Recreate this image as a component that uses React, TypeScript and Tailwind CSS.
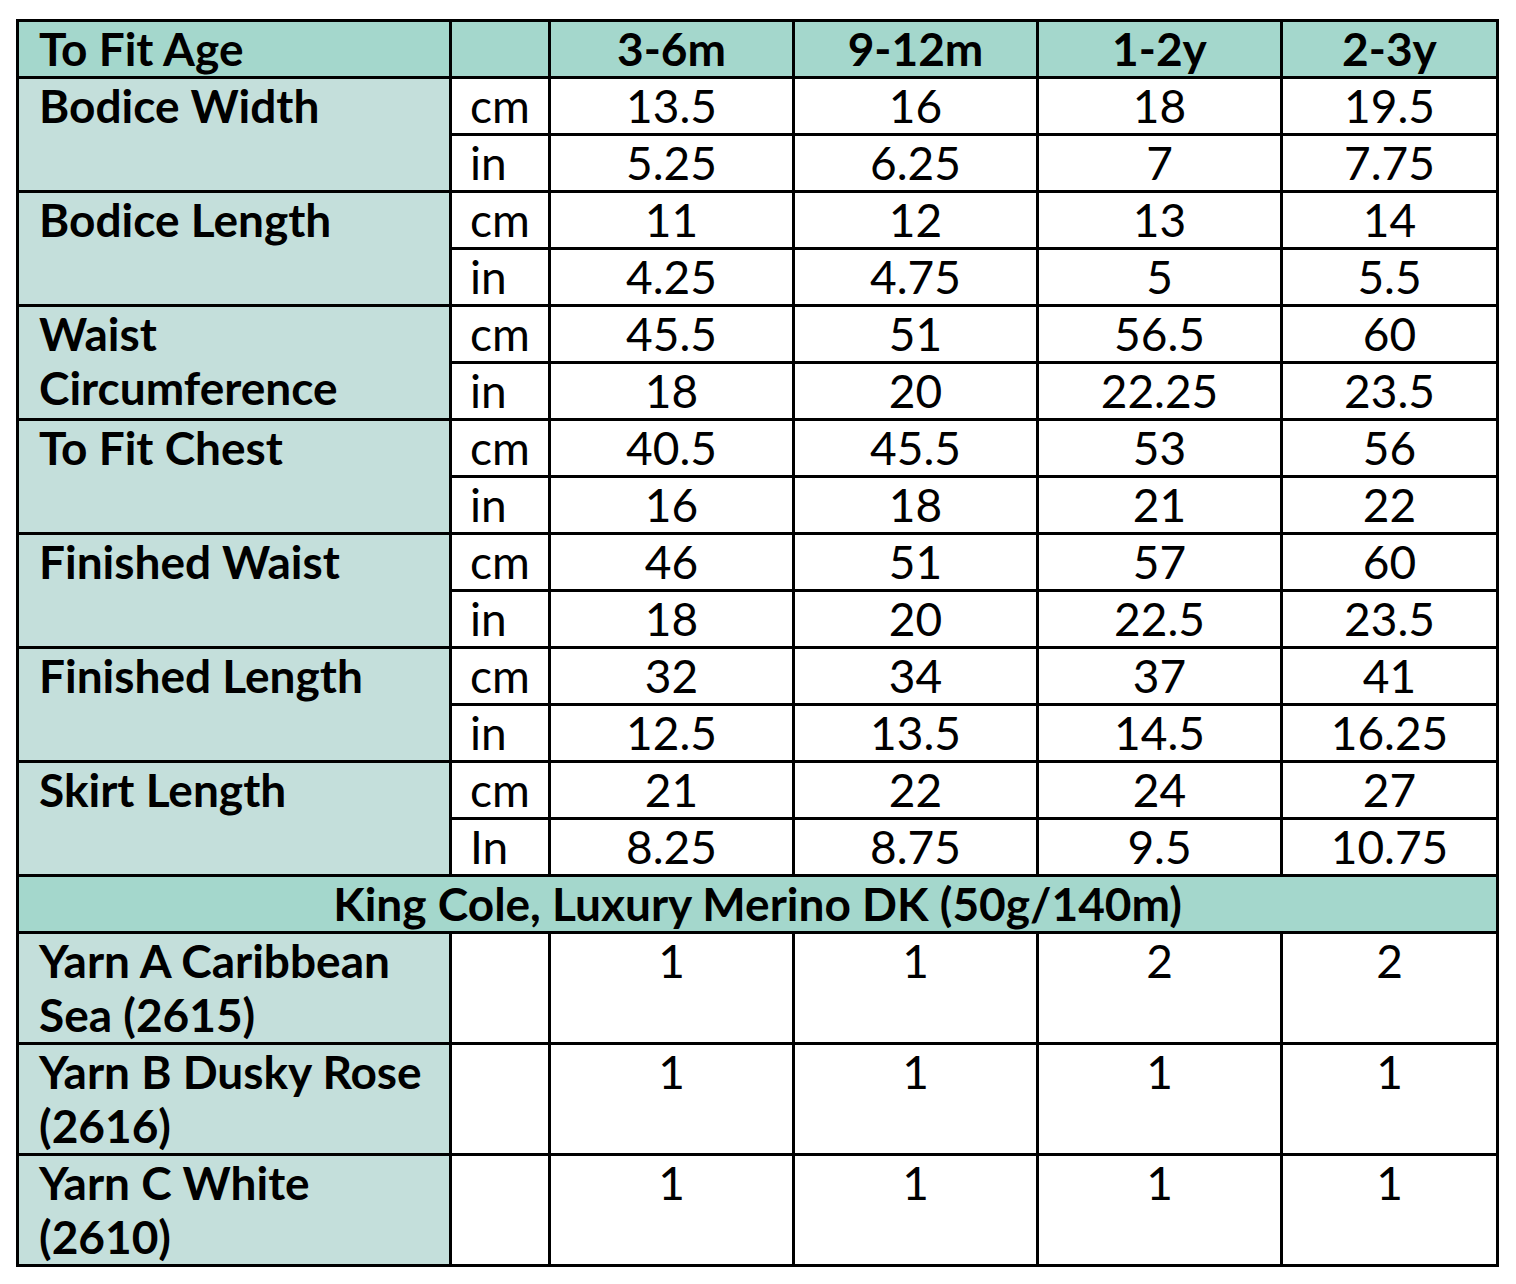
const sizes = ["3-6m", "9-12m", "1-2y", "2-3y"];

const measurements = [
  { label: "Bodice Width", cm: ["13.5", "16", "18", "19.5"], inch: ["5.25", "6.25", "7", "7.75"] },
  { label: "Bodice Length", cm: ["11", "12", "13", "14"], inch: ["4.25", "4.75", "5", "5.5"] },
  { label: "Waist Circumference", cm: ["45.5", "51", "56.5", "60"], inch: ["18", "20", "22.25", "23.5"] },
  { label: "To Fit Chest", cm: ["40.5", "45.5", "53", "56"], inch: ["16", "18", "21", "22"] },
  { label: "Finished Waist", cm: ["46", "51", "57", "60"], inch: ["18", "20", "22.5", "23.5"] },
  { label: "Finished Length", cm: ["32", "34", "37", "41"], inch: ["12.5", "13.5", "14.5", "16.25"] },
  { label: "Skirt Length", cm: ["21", "22", "24", "27"], inch: ["8.25", "8.75", "9.5", "10.75"], inchLabel: "In" },
];

const yarns = [
  { label: "Yarn A Caribbean Sea (2615)", qty: ["1", "1", "2", "2"] },
  { label: "Yarn B Dusky Rose (2616)", qty: ["1", "1", "1", "1"] },
  { label: "Yarn C White (2610)", qty: ["1", "1", "1", "1"] },
];

const cell = "border-[3px] border-black align-top p-0";
const labelCell = `${cell} bg-[#c4dfdb] font-bold text-left pl-[20px] pr-2`;
const unitCell = `${cell} bg-white text-left pl-[18px]`;
const numCell = `${cell} bg-white text-center`;

export default function App() {
  return (
    <div className="bg-white min-h-screen pt-[19px] pl-[16px]">
      <table
        className="table-fixed border-collapse text-black text-[46px] leading-[54px] w-[1480px]"
        style={{ fontFamily: "Lato, 'Liberation Sans', sans-serif" }}
      >
        <colgroup>
          <col className="w-[433px]" />
          <col className="w-[99px]" />
          <col className="w-[244px]" />
          <col className="w-[244px]" />
          <col className="w-[244px]" />
          <col className="w-[216px]" />
        </colgroup>
        <thead>
          <tr className="h-[57px]">
            <th className={`${cell} bg-[#a4d7cc] text-left pl-[20px] font-bold`}>To Fit Age</th>
            <th className={`${cell} bg-[#a4d7cc]`}></th>
            {sizes.map((s) => (
              <th key={s} className={`${cell} bg-[#a4d7cc] text-center font-bold`}>
                {s}
              </th>
            ))}
          </tr>
        </thead>
        <tbody>
          {measurements.map((m) => (
            <>
              <tr key={m.label + "-cm"} className="h-[57px]">
                <td rowSpan={2} className={labelCell}>
                  {m.label}
                </td>
                <td className={unitCell}>cm</td>
                {m.cm.map((v, i) => (
                  <td key={i} className={numCell}>
                    {v}
                  </td>
                ))}
              </tr>
              <tr key={m.label + "-in"} className="h-[57px]">
                <td className={unitCell}>{m.inchLabel ?? "in"}</td>
                {m.inch.map((v, i) => (
                  <td key={i} className={numCell}>
                    {v}
                  </td>
                ))}
              </tr>
            </>
          ))}
          <tr className="h-[57px]">
            <td colSpan={6} className={`${cell} bg-[#a4d7cc] text-center font-bold`}>
              King Cole, Luxury Merino DK (50g/140m)
            </td>
          </tr>
          {yarns.map((y) => (
            <tr key={y.label} className="h-[111px]">
              <td className={labelCell}>{y.label}</td>
              <td className={unitCell}></td>
              {y.qty.map((q, i) => (
                <td key={i} className={numCell}>
                  {q}
                </td>
              ))}
            </tr>
          ))}
        </tbody>
      </table>
    </div>
  );
}
